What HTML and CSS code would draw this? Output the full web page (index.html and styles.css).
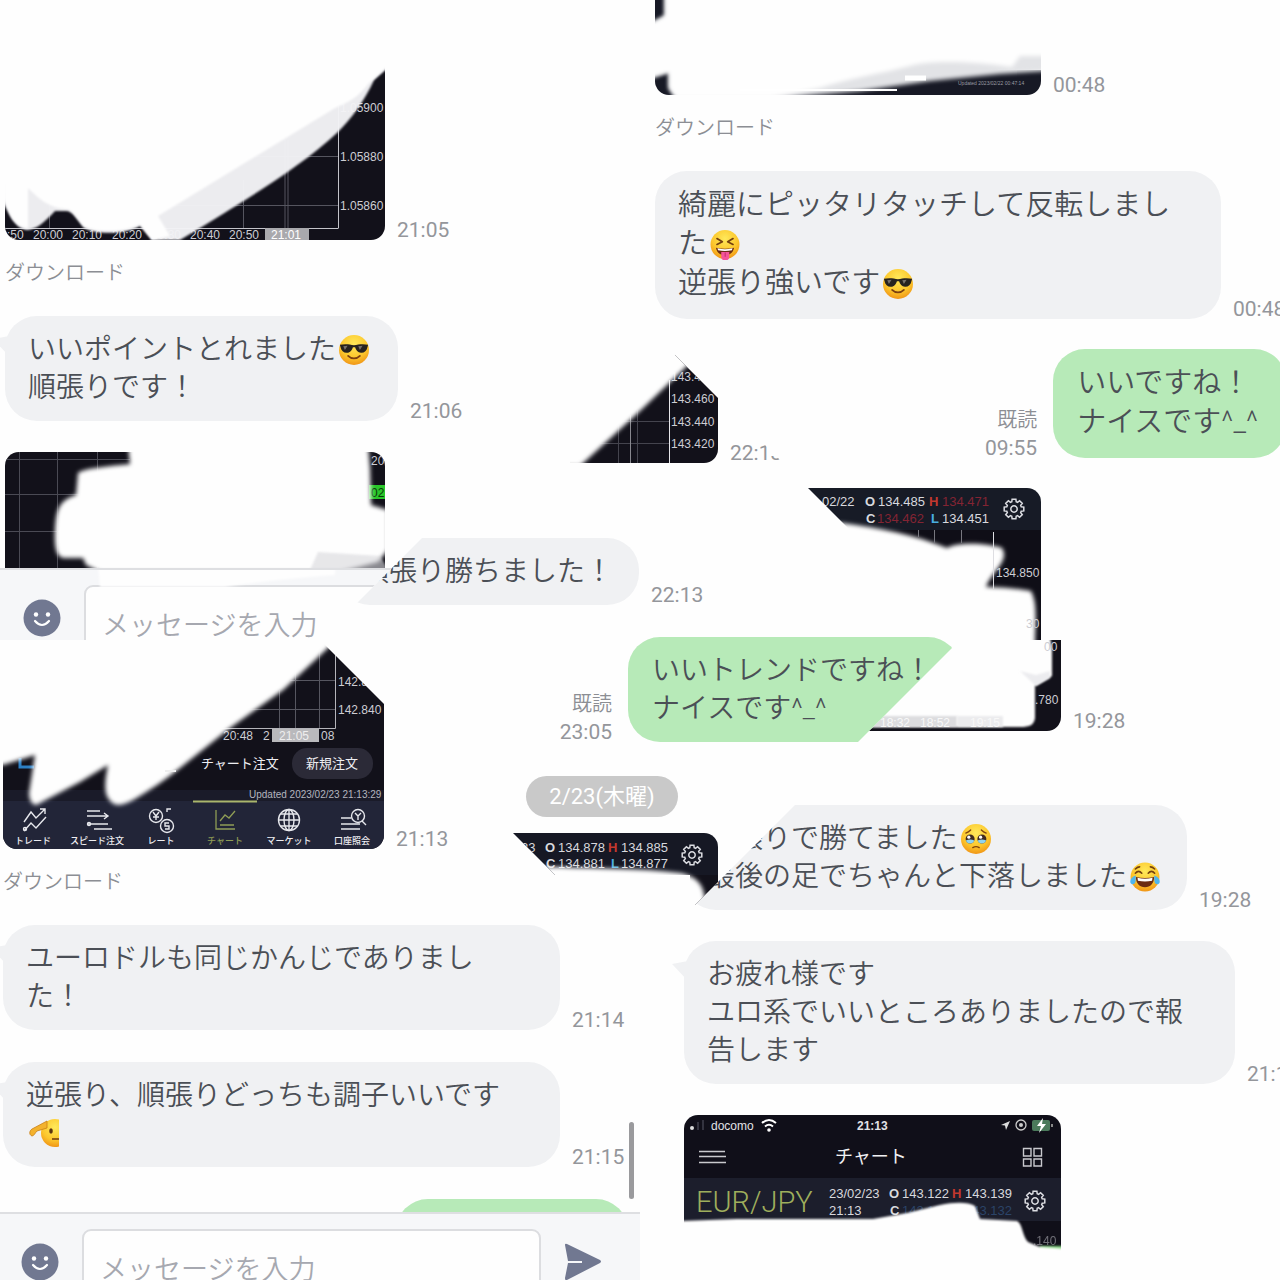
FILE: index.html
```html
<!DOCTYPE html>
<html lang="ja">
<head>
<meta charset="utf-8">
<title>トーク</title>
<meta name="viewport" content="width=device-width, initial-scale=1">
<link rel="stylesheet" href="styles.css">
</head>
<body>
<svg class="defs" aria-hidden="true">
  <defs>
    <filter id="soft" x="-5%" y="-20%" width="110%" height="140%"><feGaussianBlur stdDeviation="2"/></filter>
    <filter id="edge" x="-5%" y="-20%" width="110%" height="140%"><feGaussianBlur stdDeviation="1"/></filter>
    <radialGradient id="face" cx=".5" cy=".3" r=".75">
      <stop offset="0" stop-color="#ffe95a"/><stop offset=".6" stop-color="#fcc62c"/><stop offset="1" stop-color="#ee8c12"/>
    </radialGradient>
    <symbol id="gear" viewBox="-11 -11 22 22">
      <path d="M9.8-1.9V1.9L7.2 2.2 6.65 3.53 8.27 5.59 5.59 8.27 3.53 6.65 2.2 7.2 1.9 9.8H-1.9L-2.2 7.2-3.53 6.65-5.59 8.27-8.27 5.59-6.65 3.53-7.2 2.2-9.8 1.9V-1.9L-7.2-2.2-6.65-3.53-8.27-5.59-5.59-8.27-3.53-6.65-2.2-7.2-1.9-9.8H1.9L2.2-7.2 3.53-6.65 5.59-8.27 8.27-5.59 6.65-3.53 7.2-2.2Z" fill="none" stroke="#dcdde2" stroke-width="1.5"/>
      <circle r="3.2" fill="none" stroke="#dcdde2" stroke-width="1.5"/>
    </symbol>
    <symbol id="cool" viewBox="0 0 28 28">
      <circle cx="14" cy="14" r="14" fill="url(#face)"/>
      <path d="M.8 9.2C5 8 10 8.600 14 9.600 18 8.600 23 8 27.200 9.200L26.600 11.200C26 15 23.500 16.800 20.500 16.600 17.500 16.400 15.800 14 15 11.400H13C12.200 14 10.500 16.400 7.500 16.600 4.500 16.800 2 15 1.400 11.200Z" fill="#26221f"/>
      <path d="M4 10.500 8 10 5.500 14ZM18 10.500 22 10 19.500 14Z" fill="#77716b"/>
      <path d="M8.500 19.500C11.500 22.600 16.500 22.600 19.500 19.500" fill="none" stroke="#7c3f10" stroke-width="1.700" stroke-linecap="round"/>
    </symbol>
    <symbol id="tongue" viewBox="0 0 28 28">
      <circle cx="14" cy="13.500" r="13.500" fill="url(#face)"/>
      <path d="M6.500 8 11.500 11 6.500 13.500M21.500 8 16.500 11 21.500 13.500" fill="none" stroke="#74400f" stroke-width="1.600" stroke-linecap="round" stroke-linejoin="round"/>
      <path d="M5.500 16.500Q14 18.500 22.500 16.500C21.500 21.500 18 23.500 14 23.500S6.500 21.500 5.500 16.500Z" fill="#6b2c12"/>
      <path d="M7 17Q14 18.800 21 17L20.500 18.800Q14 20.300 7.500 18.800Z" fill="#fff"/>
      <path d="M10.500 20.500H18V25A3.700 3.400 0 0 1 10.500 25Z" fill="#f4549a"/>
      <path d="M14.200 21V25" stroke="#c92f70" stroke-width="1"/>
    </symbol>
    <symbol id="teary" viewBox="0 0 28 28">
      <circle cx="14" cy="14" r="14" fill="url(#face)"/>
      <circle cx="8.500" cy="14" r="4.200" fill="#3f2a20"/><circle cx="19.500" cy="14" r="4.200" fill="#3f2a20"/>
      <path d="M4.500 15.500A4.200 4 0 0 0 12.500 15.500Q8.500 13.500 4.500 15.500ZM15.500 15.500A4.200 4 0 0 0 23.500 15.500Q19.500 13.500 15.500 15.500Z" fill="#8fd3ef"/>
      <circle cx="7.300" cy="12.300" r="1.500" fill="#fff"/><circle cx="18.300" cy="12.300" r="1.500" fill="#fff"/>
      <path d="M4.500 8.500Q7 7.500 9 5.500M23.500 8.500Q21 7.500 19 5.500M11 22Q14 20.300 17 22" fill="none" stroke="#80450f" stroke-width="1.300" stroke-linecap="round"/>
    </symbol>
    <symbol id="joy" viewBox="0 0 28 28">
      <circle cx="14" cy="14" r="13.500" fill="url(#face)"/>
      <path d="M5 10.500Q8 7 11 10.500M17 10.500Q20 7 23 10.500M5 6.500Q7 4.500 9 4.500M23 6.500Q21 4.500 19 4.500" fill="none" stroke="#74400f" stroke-width="1.500" stroke-linecap="round"/>
      <path d="M5.500 14Q14 16 22.500 14C22.500 20 19 23.500 14 23.500S5.500 20 5.500 14Z" fill="#6b2c12"/>
      <path d="M7 14.800Q14 16.500 21 14.800L20.600 17.500Q14 18.800 7.400 17.500Z" fill="#fff"/>
      <path d="M5.500 12.500C1.500 13.500-.5 17 .5 19.500 2 22 5 20.500 5.200 18 5.400 16 5.200 14 5.500 12.500ZM22.500 12.500C26.500 13.500 28.500 17 27.500 19.500 26 22 23 20.500 22.800 18 22.600 16 22.800 14 22.500 12.500Z" fill="#4eb5ee"/>
    </symbol>
    <symbol id="salute" viewBox="0 0 30 28">
      <circle cx="26" cy="14" r="14" fill="url(#face)"/>
      <path d="M18 2 3 10C0 12 0 16 3 17 5 17 6 14 8 12L18 9Z" fill="#f3b22d" stroke="#c98016" stroke-width=".8"/>
      <ellipse cx="22" cy="12" rx="1.800" ry="2.800" fill="#5b3410"/>
      <path d="M23 20H30" stroke="#74400f" stroke-width="1.600"/>
    </symbol>
    <symbol id="smile" viewBox="0 0 38 38">
      <circle cx="19" cy="19" r="18.500" fill="#717891"/>
      <circle cx="13" cy="15.500" r="2.200" fill="#fff"/><circle cx="25" cy="15.500" r="2.200" fill="#fff"/>
      <path d="M12 22Q19 30 26 22" fill="none" stroke="#fff" stroke-width="2.200" stroke-linecap="round"/>
    </symbol>
  </defs>
</svg>

<main class="board">

  <section class="pane pane--tl" aria-label="トーク 1">
    <div class="thread">
      <div class="row">
        <svg class="photo photo--cut" width="380" height="240" viewBox="5 0 380 240" role="img" aria-label="チャート画像">
          <rect x="5" y="60" width="380" height="180" fill="#12111a"/>
          <path d="M338.500 90V228M243.500 180V228M285 140V228M288 140V228M49.500 205V228" stroke="#55555f"/>
          <path d="M338.500 100V228.500M5 228.500H338" stroke="#c4c4ca"/>
          <path d="M200 156.500H338M150 205.500H338" stroke="#55555f"/>
          <rect x="265" y="228" width="44" height="12" fill="#a9a9ad"/>
          <g class="axis"><text x="340" y="112">1.05900</text><text x="340" y="161">1.05880</text><text x="340" y="210">1.05860</text>
          <text x="7" y="239">:50</text><text x="33" y="239">20:00</text><text x="72" y="239">20:10</text><text x="112" y="239">20:20</text><text x="151" y="239">20:30</text><text x="190" y="239">20:40</text><text x="229" y="239">20:50</text><text x="271" y="239" fill="#fff">21:01</text></g>
          <path d="M-5-5H390V66L374 80C365 100 352 118 338 132 300 168 240 203 205 225L180 240H152L140 226C128 233 100 236 84 228 76 219 73 211 66 211H55C45 222 36 230 26 230 14 227 9 215 4 203Z" fill="#f3f3f6" fill-opacity=".97" filter="url(#edge)"/>
          <path d="M-5-5H390V64L368 84C358 98 348 102 335 108L158 216 170 236 152 240 140 224C128 231 100 234 84 226 76 217 73 209 66 209 50 208 40 200 28 188V228C14 227 9 212 4 200Z" fill="#fefefe" filter="url(#edge)"/>
        </svg>
        <time class="time">21:05</time>
      </div>
      <a class="download" href="#">ダウンロード</a>
      <div class="row">
        <p class="bubble bubble--393 bubble--tail">いいポイントとれました<svg class="emoji" role="img" aria-label="サングラスの笑顔"><use href="#cool"/></svg><br>順張りです！</p>
        <time class="time">21:06</time>
      </div>
      <div class="row row--next">
        <svg class="photo" width="380" height="240" viewBox="5 452 380 240" role="img" aria-label="チャート画像">
          <rect x="5" y="452" width="380" height="240" fill="#12111a"/>
          <path d="M19.500 452V570M57.500 452V570M97.500 452V570M5 459.500H130M5 494.500H80M5 531.500H60" stroke="#4a4a54"/>
          <g class="axis"><text x="371" y="465">20</text><rect x="369" y="485" width="16" height="14" fill="#2ac72a"/><text x="371" y="497" class="ink">02</text></g>
          <path d="M128 445L130 464C112 466 84 468 78 473L76 495C60 500 56 508 55 530 54 552 58 558 65 558H83L86 565 100 572H340L378 562 388 550V510L371 505 370 468 368 445Z" fill="#fefefe" filter="url(#soft)"/>
          <path d="M318 552 380 556 386 566V570H310Z" fill="#d8d8dc" opacity=".6" filter="url(#edge)"/>
        </svg>
      </div>
    </div>
    <form class="composer">
      <button class="icon-button" type="button" aria-label="スタンプ"><svg width="38" height="38"><use href="#smile"/></svg></button>
      <input class="entry" type="text" placeholder="メッセージを入力" aria-label="メッセージを入力">
      <svg class="smear" width="300" height="24" viewBox="0 0 300 24" aria-hidden="true"><path d="M3-4H240V7C200 10 160 14 130 19H5Z" fill="#fefefe" filter="url(#edge)"/></svg>
    </form>
  </section>

  <section class="pane pane--tr" aria-label="トーク 2">
    <div class="thread">
      <div class="row">
        <svg class="photo photo--cut" width="386" height="95" viewBox="655 0 386 95" role="img" aria-label="チャート画像">
          <path d="M655 0H672V24H655ZM655 70H1041V95H655Z" fill="#171925"/>
          <text class="micro" x="958" y="85">Updated 2023/02/22 00:47:14</text>
          <path d="M665-5 665 16 650 24V78L669 72V88L676 98H780L860 91 930 81 1000 74 1046 71V-5Z" fill="#e2e3e6" filter="url(#soft)"/>
          <path d="M665-5 665 16 650 24V78L669 72V88L676 98H770L820 88C850 78 880 74 910 66 930 60 970 61 1012 67L1020 56H1046V-5Z" fill="#fefefe" filter="url(#soft)"/>
          <path d="M740 90H897" stroke="#fff" stroke-width="2"/><path d="M905 78H926" stroke="#fff" stroke-width="5"/>
        </svg>
        <time class="time">00:48</time>
      </div>
      <a class="download" href="#">ダウンロード</a>
      <div class="row">
        <p class="bubble bubble--566">綺麗にピッタリタッチして反転しまし<br>た<svg class="emoji" role="img" aria-label="舌を出した顔"><use href="#tongue"/></svg><br>逆張り強いです<svg class="emoji" role="img" aria-label="サングラスの笑顔"><use href="#cool"/></svg></p>
        <time class="time">00:48</time>
      </div>
      <div class="row row--next row--out">
        <div class="meta"><span>既読</span><time class="time">09:55</time></div>
        <p class="bubble bubble--out">いいですね！<br>ナイスです^_^</p>
      </div>
      <div class="row row--next">
        <svg class="photo" width="386" height="240" viewBox="655 489 386 240" role="img" aria-label="チャート画像">
          <rect x="800" y="531" width="241" height="198" fill="#0f0e17"/><rect x="655" y="489" width="386" height="42" fill="#171b26"/>
          <g class="quote"><text x="822" y="507">02/22</text><text class="key" x="865" y="507">O</text><text x="878" y="507">134.485</text><text class="key high" x="929" y="507">H</text><text class="dim-red" x="942" y="507">134.471</text>
          <text class="key" x="866" y="524">C</text><text class="dim-red" x="877" y="524">134.462</text><text class="key low" x="931" y="524">L</text><text x="942" y="524">134.451</text></g>
          <use href="#gear" x="1003" y="499" width="22" height="22"/>
          <text class="axis" x="996" y="578">134.850</text>
          <path d="M650 524H842C880 529 915 536 947 549 960 542 990 545 1002 549 1010 562 992 572 986 588 1000 588 1020 590 1031 592 1038 606 1035 620 1035 650H650Z" fill="#fefefe" filter="url(#soft)"/>
          <path d="M918.500 531V538M934.500 531V544M961.500 531V544" stroke="#77777f"/><path d="M993.500 533V590" stroke="#dedee2"/>
          <text class="axis" x="1026" y="629">30</text>
        </svg>
      </div>
    </div>
  </section>

  <section class="pane pane--bl" aria-label="トーク 3">
    <div class="thread">
      <div class="row">
        <svg class="photo photo--cut" width="381" height="209" viewBox="3 640 381 209" role="img" aria-label="取引アプリのチャート画面">
          <rect x="3" y="640" width="381" height="209" fill="#12111a"/><rect x="3" y="790" width="381" height="12" fill="#1a1b29"/><rect x="3" y="801" width="381" height="48" fill="#222538"/>
          <path d="M279.500 690V728M295.500 670V728M319.500 650V728M230 709.500H335M290 680.500H335" stroke="#565660"/>
          <path d="M335.500 640V728.500H220" fill="none" stroke="#b4b4ba"/>
          <rect x="272" y="729" width="47" height="13" fill="#b9b9bc"/>
          <g class="axis"><text x="338" y="686">142.860</text><text x="338" y="714">142.840</text><text x="223" y="740">20:48</text><text x="263" y="740">2</text><text x="279" y="740" fill="#eee">21:05</text><text x="321" y="740">08</text></g>
          <rect x="292" y="748" width="81" height="31" rx="15" fill="#2b2a37"/>
          <g class="app-label"><text x="201" y="768">チャート注文</text><text x="306" y="768">新規注文</text></g>
          <text class="updated" x="249" y="798">Updated  2023/02/23 21:13:29</text>
          <path d="M193 801.500H257" stroke="#aab66c" stroke-width="2"/>
          <path d="M20 758V767H34" fill="none" stroke="#2c7fc4" stroke-width="3"/>
          <path d="M-10 625H345L328 648 283 690 230 728 180 768C165 780 150 790 135 799 122 806 114 808 108 798 103 790 106 775 108 765L80 782 40 803C34 808 29 802 29 793L35 755 3 765H-10Z" fill="#fefefe" filter="url(#soft)"/>
          <path d="M165 771H176" stroke="#eee" stroke-width="2"/>
          <g fill="none" stroke="#e6e7ec" stroke-width="1.400">
            <path d="M24 822 31 812 36 818 45 809M40 809H45V814M24 831 31 823 36 828 46 817"/><circle cx="25" cy="829" r="1.500"/>
            <path d="M87 811H100M87 816H108M104 813 108 816 104 819M87 824H108M94 829H112"/><circle cx="89" cy="824" r="1.500"/>
            <circle cx="156" cy="816" r="6.500"/><circle cx="167" cy="826" r="6.500"/><path d="M153 812 156 816 159 812M156 816V820M153 817H159M169 823H165V826H169V829H165M167 812V809H171"/>
            <circle cx="289" cy="820" r="10.500"/><ellipse cx="289" cy="820" rx="5" ry="10.500"/><path d="M289 810V830M279 820H299M281 814H297M281 826H297"/>
            <path d="M341 818H351M341 824H360M341 829H360"/><circle cx="358" cy="816" r="6.500"/><path d="M362 821 366 825M355 813 358 816 361 813M358 816V820"/>
          </g>
          <path d="M216 810V829H235M220 821 225 815 229 818 235 811M220 825H234" fill="none" stroke="#8e9c55" stroke-width="1.300"/>
          <g class="tab"><text x="33" y="844">トレード</text><text x="97" y="844">スピード注文</text><text x="161" y="844">レート</text><text class="tab-on" x="225" y="844">チャート</text><text x="289" y="844">マーケット</text><text x="352" y="844">口座照会</text></g>
        </svg>
        <time class="time">21:13</time>
      </div>
      <a class="download" href="#">ダウンロード</a>
      <div class="row">
        <p class="bubble bubble--557 bubble--tail">ユーロドルも同じかんじでありまし<br>た！</p>
        <time class="time">21:14</time>
      </div>
      <div class="row row--next">
        <p class="bubble bubble--557 bubble--tail">逆張り、順張りどっちも調子いいです<br><svg class="emoji" role="img" aria-label="敬礼する顔"><use href="#salute" width="30" height="28"/></svg></p>
        <time class="time">21:15</time>
      </div>
      <div class="row row--next row--out">
        <p class="bubble bubble--out bubble--peek"></p>
      </div>
      <span class="scrollbar"></span>
    </div>
    <form class="composer">
      <button class="icon-button" type="button" aria-label="スタンプ"><svg width="38" height="38"><use href="#smile"/></svg></button>
      <input class="entry" type="text" placeholder="メッセージを入力" aria-label="メッセージを入力">
      <button class="icon-button" type="button" aria-label="送信"><svg width="38" height="38" viewBox="0 0 38 38"><path d="M1 2Q1 0 3 1L36 17Q38 18.500 36 20L3 37Q1 38 1 35L4 20H18V18H4Z" fill="#717891"/></svg></button>
    </form>
  </section>

  <section class="pane pane--br" aria-label="トーク 4">
    <div class="thread">
      <div class="row">
        <svg class="photo photo--cut" width="377" height="91" viewBox="684 640 377 91" role="img" aria-label="チャート画像">
          <path d="M1000 640H1061V731H684V720H1000Z" fill="#12111a"/>
          <g class="axis"><text x="1035" y="704">.780</text></g>
          <path d="M680 630H1049L1052 650V676L1035 686V718C1034 725 1030 727 1020 727H680Z" fill="#fefefe" filter="url(#edge)"/>
          <path d="M1020 671 1036 675 1050 671V678L1036 686Z" fill="#ececef" filter="url(#edge)"/>
          <rect x="860" y="716" width="97" height="11" fill="#dcdcdf" filter="url(#edge)"/><rect x="957" y="716" width="46" height="11" fill="#ebebed" filter="url(#edge)"/>
          <g class="axis ghost"><text x="880" y="727">18:32</text><text x="920" y="727">18:52</text><text x="970" y="727">19:15</text></g>
          <text class="axis" x="1044" y="651">00</text>
        </svg>
        <time class="time">19:28</time>
      </div>
      <div class="row row--apart">
        <p class="bubble bubble--503">順張りで勝てました<svg class="emoji" role="img" aria-label="涙をこらえる顔"><use href="#teary"/></svg><br>最後の足でちゃんと下落しました<svg class="emoji" role="img" aria-label="うれし泣きの顔"><use href="#joy"/></svg></p>
        <time class="time">19:28</time>
      </div>
      <div class="row row--next">
        <p class="bubble bubble--551 bubble--tail">お疲れ様です<br>ユロ系でいいところありましたので報<br>告します</p>
        <time class="time">21:13</time>
      </div>
      <div class="row row--next">
        <svg class="photo" width="377" height="240" viewBox="684 1115 377 240" role="img" aria-label="EUR/JPYのチャート画面">
          <rect x="684" y="1115" width="377" height="140" fill="#100f19"/><rect x="684" y="1178" width="377" height="43" fill="#1c1e2c"/>
          <circle cx="692" cy="1128" r="2" fill="#ddd"/><path d="M698 1122V1130M703 1120V1130" stroke="#33333f" stroke-width="2"/>
          <text class="status" x="711" y="1130">docomo</text><text class="status status--time" x="857" y="1130">21:13</text>
          <path d="M762 1123Q769 1117 776 1123M765 1126.500Q769 1123 773 1126.500" fill="none" stroke="#fff" stroke-width="2"/><circle cx="769" cy="1130" r="1.800" fill="#fff"/>
          <path d="M1001 1125 1010 1121 1006 1130 1005 1125.500Z" fill="#ddd"/><circle cx="1021" cy="1125" r="5" fill="none" stroke="#ccc" stroke-width="1.300"/><circle cx="1021" cy="1125" r="2" fill="#ccc"/>
          <rect x="1032" y="1120" width="18" height="11" rx="2" fill="#4b7a5b"/><path d="M1052 1124V1127" stroke="#888" stroke-width="2"/><path d="M1043 1118 1037 1126H1041L1039 1133 1046 1124H1042Z" fill="#fff"/>
          <path d="M699 1151.500H725M699 1156.500H726M699 1162.500H726" stroke="#c9c9ce" stroke-width="1.500"/>
          <text class="app-title" x="835" y="1163">チャート</text>
          <path d="M1023.500 1148.500H1031V1156H1023.500ZM1034 1148.500H1041.500V1156H1034ZM1023.500 1159H1031V1166H1023.500ZM1034 1159H1041.500V1166H1034Z" fill="none" stroke="#c9c9ce" stroke-width="1.400"/>
          <text class="pair" x="696" y="1212">EUR/JPY</text>
          <g class="quote"><text x="829" y="1198">23/02/23</text><text x="829" y="1215">21:13</text><text class="key" x="889" y="1198">O</text><text x="902" y="1198">143.122</text><text class="key high" x="952" y="1198">H</text><text x="965" y="1198">143.139</text><text class="key" x="890" y="1215">C</text><text class="dim-blue" x="902" y="1215">143.132</text><text class="dim-blue" x="965" y="1215">143.132</text></g>
          <use href="#gear" x="1024" y="1190" width="22" height="22"/>
          <path d="M1040 1246H1066V1260L1036 1258Z" fill="#7fd07a" filter="url(#edge)"/>
          <path d="M680 1221 737 1219H873L907 1213 940 1205C955 1202 968 1202 975 1206L980 1219 1017 1221C1023 1224 1022 1236 1028 1242L1040 1247 1066 1249V1300H680Z" fill="#fefefe" filter="url(#edge)"/>
          <text class="axis" x="1033" y="1245" opacity=".5">.140</text>
        </svg>
      </div>
    </div>
  </section>

  <section class="diamond" aria-label="トーク 5">
    <div class="row">
      <svg class="photo photo--cut" width="380" height="143" viewBox="338 320 380 143" role="img" aria-label="チャート画像">
        <path d="M570 463V455L680 350H718V463Z" fill="#12111a"/>
        <path d="M618.500 425V463M637.500 410V463M620 421.500H669M600 443.500H669" stroke="#44444e"/><path d="M630.500 415V463" stroke="#88888f"/><path d="M669.500 380V463" stroke="#e6e6ea"/>
        <g class="axis"><text x="671" y="381">143.480</text><text x="671" y="403">143.460</text><text x="671" y="426">143.440</text><text x="671" y="448">143.420</text></g>
        <path d="M330 310H745L688 365 640 411 580 466H330Z" fill="#fefefe" filter="url(#soft)"/>
      </svg>
      <time class="time">22:13</time>
    </div>
    <div class="row row--apart">
      <p class="bubble">順張り勝ちました！</p>
      <time class="time">22:13</time>
    </div>
    <div class="row row--next row--out">
      <div class="meta"><span>既読</span><time class="time">23:05</time></div>
      <p class="bubble bubble--out">いいトレンドですね！<br>ナイスです^_^</p>
    </div>
    <div class="day"><span class="day-label">2/23(木曜)</span></div>
    <div class="row">
      <svg class="photo" width="380" height="200" viewBox="338 833 380 200" role="img" aria-label="チャート画像">
        <path d="M690 870H718V905H690Z" fill="#12111a"/><rect x="338" y="833" width="380" height="42" fill="#161824"/>
        <g class="quote"><text x="503" y="852">02/23</text><text class="key" x="545" y="852">O</text><text x="558" y="852">134.878</text><text class="key high" x="608" y="852">H</text><text x="621" y="852">134.885</text>
        <text class="key" x="546" y="868">C</text><text x="558" y="868">134.881</text><text class="key low" x="611" y="868">L</text><text x="621" y="868">134.877</text></g>
        <use href="#gear" x="681" y="844" width="22" height="22"/>
        <path d="M330 867H560C600 869 640 868 680 873 700 877 704 888 705 900V1040H330Z" fill="#fefefe" filter="url(#soft)"/>
      </svg>
    </div>
  </section>
</main>
</body>
</html>
```
FILE: styles.css
```css
* { box-sizing: border-box; }

body {
  margin: 0;
  background: #fefefe;
  color: #4b4f56;
  font-family: Roboto, "Noto Sans CJK JP", sans-serif;
  font-weight: 350;
}

.defs { position: absolute; width: 0; height: 0; }

/* four talk rooms with a fifth one laid over the middle */
.board {
  position: relative;
  display: grid;
  grid-template-columns: 1fr 1fr;
  grid-template-rows: 1fr 1fr;
  height: 100vh;
  overflow: hidden;
}

.pane {
  --size: 28px;
  --line: 38px;
  display: flex;
  flex-direction: column;
  min-width: 0;
  min-height: 0;
  overflow: hidden;
}

.pane--tl { --inset: 5px; --bar: 72px; --gap: 31px; }
.pane--tr { --inset: 15px; --size: 29px; --line: 39px; --gap: 30px; --foot: 16px; }
.pane--bl { --inset: 3px; --bar: 68px; }
.pane--br { --inset: 44px; --gap: 31px; --apart: 74px; }

.thread {
  position: relative;
  flex: 1;
  min-height: 0;
  overflow: hidden;
  padding-left: var(--inset);
}

.diamond {
  --size: 28px;
  --line: 38px;
  position: absolute;
  top: 50%;
  left: 50%;
  width: 640px;
  height: 640px;
  margin: -320px 0 0 -320px;
  padding-left: 18px;
  background: #fefefe;
  clip-path: polygon(50% 0, 100% 50%, 50% 100%, 0 50%);
  overflow: hidden;
}

.row {
  display: flex;
  align-items: flex-end;
  gap: 12px;
}

.row > * { flex: none; }
.row--next { margin-top: var(--gap, 32px); }
.row--apart { margin-top: var(--apart, 75px); }
.row--out { justify-content: flex-end; gap: 16px; }
.pane--tr .row--out { margin-right: -6px; }
.pane--bl .row--out { margin-right: 12px; }

.photo { display: block; border-radius: 14px; }
.photo--cut { border-radius: 0 0 14px 14px; }

.time {
  font-size: 21px;
  font-weight: 400;
  line-height: 20px;
  color: #94969b;
}

.meta {
  display: flex;
  flex-direction: column;
  align-items: flex-end;
  gap: 8px;
  font-size: 20px;
  line-height: 20px;
  color: #8c8e94;
}

.download {
  display: block;
  padding: 23px 0 33px;
  font-size: 20px;
  line-height: 20px;
  color: #8c8e94;
  text-decoration: none;
}

.bubble {
  position: relative;
  margin: 0;
  padding: 15px 26px var(--foot, 14px) 23px;
  border-radius: 32px;
  background: #f0f1f3;
  font-size: var(--size);
  line-height: var(--line);
  white-space: nowrap;
}

.bubble--393 { width: 393px; }
.bubble--503 { width: 503px; }
.bubble--551 { width: 551px; }
.bubble--557 { width: 557px; }
.bubble--566 { width: 566px; }

.bubble--out {
  padding-right: 28px;
  padding-left: 24px;
  background: #b7eab8;
}

.bubble--peek { width: 232px; height: 105px; }

.bubble--tail::before {
  content: "";
  position: absolute;
  top: 20px;
  left: -12px;
  width: 16px;
  height: 20px;
  background: #f0f1f3;
  clip-path: polygon(0 15%, 100% 0, 100% 100%);
}

.emoji {
  width: 30px;
  height: 30px;
  margin-left: 3px;
  vertical-align: -6px;
}

.day {
  display: flex;
  justify-content: center;
  margin: 34px 94px 16px 0;
}

.day-label {
  padding: 0 23px;
  border-radius: 21px;
  background: #c9c9c9;
  color: #fff;
  font-size: 22px;
  font-weight: 400;
  line-height: 41px;
}

.composer {
  position: relative;
  flex: none;
  display: flex;
  align-items: flex-start;
  gap: 23px;
  height: var(--bar);
  padding: 15px 38px 0 0;
  padding-left: calc(var(--inset) + 18px);
  border-top: 2px solid #dedfe2;
  background: #f6f7f9;
  overflow: hidden;
}

.icon-button {
  flex: none;
  padding: 0;
  border: 0;
  margin-top: 14px;
  background: none;
}

.icon-button svg { display: block; }

.entry {
  flex: 1;
  min-width: 0;
  height: 82px;
  padding: 0 16px;
  border: 2px solid #dcdde0;
  border-radius: 9px;
  background: #fefefe;
  font: inherit;
  font-size: 27px;
}

.entry::placeholder { color: #a6a8b0; opacity: 1; }

.smear { position: absolute; top: -2px; left: 95px; }

.scrollbar {
  position: absolute;
  right: 6px;
  bottom: 13px;
  width: 5px;
  height: 77px;
  border-radius: 3px;
  background: #9a9a9d;
}

/* lettering inside the chart pictures */
.axis, .quote, .micro, .updated {
  font-family: "Liberation Sans", sans-serif;
  font-weight: 400;
  font-size: 12px;
  fill: #cdcdd3;
}

.quote { font-size: 13px; fill: #d8d9de; }
.axis .ink { fill: #0a3a0a; }
.ghost { fill: #f8f8f8; }
.key { font-weight: 700; }
.high { fill: #c2382e; }
.low { fill: #49aee0; }
.dim-red { fill: #832433; }
.dim-blue { fill: #2b4468; }
.micro { font-size: 5px; fill: #9a9ba3; }
.updated { font-size: 10px; fill: #b4b5bf; }

.app-label { font-size: 13px; font-weight: 400; fill: #eeeef2; }
.app-title { font-size: 18px; font-weight: 400; fill: #f0f0f3; }
.tab { font-size: 9px; font-weight: 500; fill: #eeeef2; text-anchor: middle; }
.tab-on { fill: #8e9c55; }
.status { font-family: "Liberation Sans", sans-serif; font-size: 12px; font-weight: 400; fill: #e2e2e6; }
.status--time { font-weight: 700; }
.pair { font-family: Roboto, sans-serif; font-size: 29px; font-weight: 300; fill: #9fae5c; }
```
